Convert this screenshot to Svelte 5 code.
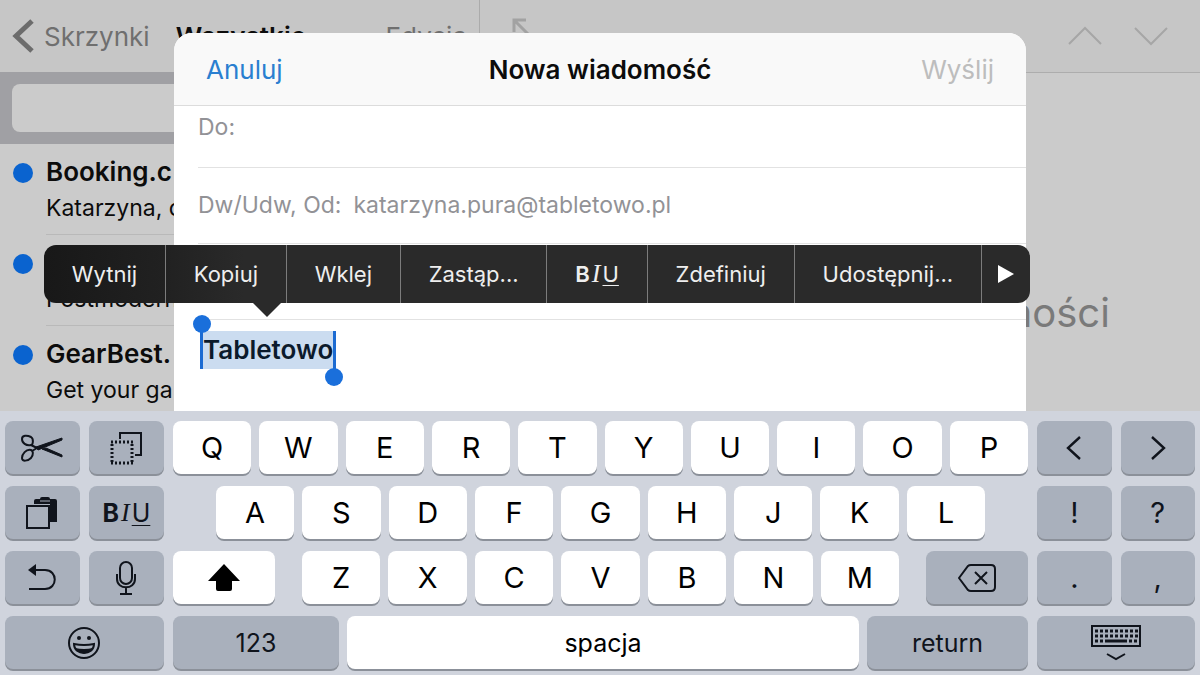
<script>
	const mail_list = [
		{ sender: 'Booking.c', preview: 'Katarzyna, o' },
		{ sender: '', preview: 'Postmodern' },
		{ sender: 'GearBest.', preview: 'Get your ga' }
	];

	const menu_before = ['Wytnij', 'Kopiuj', 'Wklej', 'Zastąp...'];
	const menu_after = ['Zdefiniuj', 'Udostępnij...'];

	const row_one = 'QWERTYUIOP'.split('');
	const row_two = 'ASDFGHJKL'.split('');
	const row_three = 'ZXCVBNM'.split('');

	const dot_xs = [0, 1, 2, 3, 4, 5, 6, 7, 8];

	let recipient = $state('');
	let sender = $state('katarzyna.pura@tabletowo.pl');
	let subject = $state('');
	let search = $state('');
</script>

{#snippet letter(label)}
	<button type="button" class="key light">{label}</button>
{/snippet}

<div class="screen">
	<main class="stage">
		<section class="inbox">
			<header class="bar inbox_bar">
				<button type="button" class="back">
					<svg width="22" height="34" viewBox="0 0 22 34" aria-hidden="true">
						<path d="M20 2 4 17l16 15" fill="none" stroke="#6c6c6c" stroke-width="5" />
					</svg>
					Skrzynki
				</button>
				<h2 class="inbox_title">Wszystkie</h2>
				<button type="button" class="edit">Edycja</button>
			</header>
			<div class="search_band">
				<input class="search" type="search" aria-label="Szukaj" bind:value={search} />
			</div>
			<ul class="mails">
				{#each mail_list as mail (mail.preview)}
					<li class="mail">
						<span class="unread"></span>
						<div class="mail_text">
							<strong class="mail_sender">{mail.sender}</strong>
							<span class="mail_preview">{mail.preview}</span>
						</div>
					</li>
				{/each}
			</ul>
		</section>

		<section class="reader">
			<header class="bar reader_bar">
				<svg class="expand" width="40" height="36" viewBox="0 0 40 36" aria-hidden="true">
					<path d="M2 14V2h12M3 3l14 14" fill="none" stroke="#a2a2a2" stroke-width="3" />
				</svg>
				<svg width="34" height="20" viewBox="0 0 34 20" aria-hidden="true">
					<path d="M1 18 17 2l16 16" fill="none" stroke="#a6a6a6" stroke-width="2" />
				</svg>
				<svg width="34" height="20" viewBox="0 0 34 20" aria-hidden="true">
					<path d="M1 2l16 16L33 2" fill="none" stroke="#a6a6a6" stroke-width="2" />
				</svg>
			</header>
			<p class="empty">Nie zaznaczono wiadomości</p>
		</section>

		<div class="overlay">
			<form class="compose">
				<header class="compose_bar">
					<button type="button" class="cancel">Anuluj</button>
					<h1 class="compose_title">Nowa wiadomość</h1>
					<button type="submit" class="send" disabled>Wyślij</button>
				</header>
				<div class="field first">
					<label for="to">Do:</label>
					<input id="to" type="text" bind:value={recipient} />
				</div>
				<div class="field">
					<label for="from">Dw/Udw, Od:</label>
					<input id="from" type="text" bind:value={sender} />
				</div>
				<div class="field">
					<input type="text" aria-label="Temat" bind:value={subject} />
				</div>
				<div class="message" role="textbox" tabindex="0" aria-label="Treść">
					<span class="selection">Tabletowo</span>
				</div>
			</form>
		</div>

		<div class="menu" role="menu">
			{#each menu_before as item (item)}
				<button type="button" class="menu_item" role="menuitem">{item}</button>
			{/each}
			<button type="button" class="menu_item biu" role="menuitem"><b>B</b><i>I</i><u>U</u></button>
			{#each menu_after as item (item)}
				<button type="button" class="menu_item" role="menuitem">{item}</button>
			{/each}
			<button type="button" class="menu_item more" role="menuitem" aria-label="Więcej">
				<svg width="16" height="18" viewBox="0 0 16 18"><path d="M0 0l16 9-16 9z" fill="#fff" /></svg>
			</button>
		</div>
	</main>

	<section class="keyboard">
		<div class="row">
			<div class="side">
				<button type="button" class="key" aria-label="Wytnij">
					<svg width="42" height="28" viewBox="0 0 42 28" fill="none" stroke="#10141c" stroke-width="2">
						<path d="M1 5c0-4 5-4 9-2 3 2 2 8 0 8-5 1-9-2-9-6z" />
						<path d="M1 24c0 4 6 3 9 0 3-4 2-7 0-8-5-1-9 4-9 8z" />
						<path d="M10 11l6 3M11 17l5-3" />
						<path d="M15 13 41 4v2L17 16zM21 15l4-1 16 7v2z" fill="#10141c" stroke-width="1" />
					</svg>
				</button>
				<button type="button" class="key" aria-label="Zaznacz">
					<svg width="34" height="34" viewBox="0 0 34 34" fill="none" stroke="#10141c" stroke-width="2">
						<path d="M11 8V2h21v22h-6" />
						<path d="M2 11h22M2 32h22M3 13v18M23 13v18" stroke-width="3" stroke-dasharray="2 2" />
					</svg>
				</button>
			</div>
			<div class="center">
				{#each row_one as label (label)}
					{@render letter(label)}
				{/each}
			</div>
			<div class="side">
				<button type="button" class="key" aria-label="W lewo">
					<svg width="16" height="26" viewBox="0 0 16 26"><path d="M14 2 2 13l12 11" fill="none" stroke="#10141c" stroke-width="2.4" /></svg>
				</button>
				<button type="button" class="key" aria-label="W prawo">
					<svg width="16" height="26" viewBox="0 0 16 26"><path d="M2 2l12 11L2 24" fill="none" stroke="#10141c" stroke-width="2.4" /></svg>
				</button>
			</div>
		</div>

		<div class="row">
			<div class="side">
				<button type="button" class="key" aria-label="Wklej">
					<svg width="32" height="34" viewBox="0 0 32 34">
						<path d="M8 8V5q0-2 2-2h4q0-2 2-2h6q2 0 2 2h5q2 0 2 2v21h-7V8z" fill="#10141c" />
						<path d="M14 5h10" stroke="#a9b0bc" stroke-width="1" />
						<path d="M1 10h22v22H1z" fill="#a9b0bc" stroke="#10141c" stroke-width="2" />
					</svg>
				</button>
				<button type="button" class="key biu"><b>B</b><i>I</i><u>U</u></button>
			</div>
			<div class="center">
				<div class="letters inset">
					{#each row_two as label (label)}
						{@render letter(label)}
					{/each}
				</div>
			</div>
			<div class="side">
				<button type="button" class="key">!</button>
				<button type="button" class="key">?</button>
			</div>
		</div>

		<div class="row">
			<div class="side">
				<button type="button" class="key" aria-label="Cofnij">
					<svg width="28" height="28" viewBox="0 0 28 28">
						<path d="M5 6h12c13 0 13 19 0 19H1" fill="none" stroke="#10141c" stroke-width="2" />
						<path d="M0 6l8-6v12z" fill="#10141c" />
					</svg>
				</button>
				<button type="button" class="key" aria-label="Dyktowanie">
					<svg width="20" height="34" viewBox="0 0 20 34" fill="none" stroke="#10141c" stroke-width="2">
						<rect x="4" y="1" width="12" height="22" rx="6" />
						<path d="M1 13v5c0 11 18 11 18 0v-5M10 27v6M4 33h12" />
					</svg>
				</button>
			</div>
			<div class="center">
				<button type="button" class="key light wide" aria-label="Shift">
					<svg width="32" height="28" viewBox="0 0 32 28"><path d="M16 0l16 17h-8v8q0 2-2 2H10q-2 0-2-2v-8H0z" fill="#000" /></svg>
				</button>
				<div class="letters">
					{#each row_three as label (label)}
						{@render letter(label)}
					{/each}
				</div>
				<button type="button" class="key wide" aria-label="Usuń">
					<svg width="38" height="28" viewBox="0 0 38 28" fill="none" stroke="#10141c" stroke-width="2">
						<path d="M13 1h20q4 0 4 4v18q0 4-4 4H13q-2 0-3-1L1 14 10 2q1-1 3-1z" />
						<path d="M17 8l12 12M29 8 17 20" />
					</svg>
				</button>
			</div>
			<div class="side">
				<button type="button" class="key">.</button>
				<button type="button" class="key">,</button>
			</div>
		</div>

		<div class="row">
			<div class="side">
				<button type="button" class="key" aria-label="Emoji">
					<svg width="34" height="34" viewBox="0 0 34 34">
						<circle cx="17" cy="17" r="15" fill="none" stroke="#10141c" stroke-width="2" />
						<circle cx="12" cy="12" r="2" fill="#10141c" />
						<circle cx="22" cy="12" r="2" fill="#10141c" />
						<path d="M7 18q10 2 20 0c0 12-20 12-20 0z" fill="none" stroke="#10141c" stroke-width="2" />
						<path d="M8 22q9 2 18 0c-3 7-15 7-18 0z" fill="#10141c" />
					</svg>
				</button>
			</div>
			<div class="center">
				<button type="button" class="key text numbers">123</button>
				<button type="button" class="key light text space">spacja</button>
				<button type="button" class="key text return">return</button>
			</div>
			<div class="side">
				<button type="button" class="key" aria-label="Ukryj klawiaturę">
					<svg width="50" height="36" viewBox="0 0 50 36" fill="none" stroke="#10141c" stroke-width="2">
						<rect x="1" y="1" width="48" height="20" />
						{#each dot_xs as n (n)}
							<path d="M{4 + n * 5} 6h3M{4 + n * 5} 11h3" stroke-width="3" />
						{/each}
						<path d="M4 16h8M38 16h8" stroke-width="3" stroke-dasharray="3 2" />
						<path d="M14 16h22" stroke-width="3" />
						<path d="M16 29l9 5 9-5" />
					</svg>
				</button>
			</div>
		</div>
	</section>
</div>

<style>
	:global(body) {
		margin: 0;
	}

	.screen {
		display: flex;
		flex-direction: column;
		min-height: 100vh;
		overflow: hidden;
		font-family: Inter, 'Liberation Sans', sans-serif;
		color: #0c0c0c;
		background: #cbcbcb;
	}

	.screen * {
		box-sizing: border-box;
	}

	button,
	input {
		font: inherit;
		color: inherit;
		border: 0;
		padding: 0;
		margin: 0;
		background: none;
		min-width: 0;
	}

	svg {
		display: block;
		flex: none;
	}

	h1,
	h2,
	p,
	ul {
		margin: 0;
		padding: 0;
	}

	.stage {
		position: relative;
		flex: 1;
		display: grid;
		grid-template-columns: 2fr 3fr;
	}

	.bar {
		display: flex;
		align-items: center;
		height: 73px;
		background: #c6c6c6;
	}

	.inbox_bar {
		gap: 26px;
		height: 72px;
		padding: 0 12px;
		border-right: 1px solid #ababab;
		font-size: 26px;
	}

	.back {
		display: flex;
		align-items: center;
		gap: 10px;
		color: #6f6f6f;
	}

	.inbox_title {
		font-size: 26px;
		font-weight: 600;
	}

	.edit {
		margin-left: auto;
		color: #6f6f6f;
	}

	.search_band {
		display: flex;
		padding: 12px;
		height: 72px;
		background: #a0a0a4;
	}

	.search {
		flex: 1;
		border-radius: 8px;
		background: #cbcbcb;
	}

	.mails {
		list-style: none;
	}

	.mail {
		display: flex;
		gap: 13px;
		padding-left: 13px;
	}

	.unread {
		width: 20px;
		height: 20px;
		margin-top: 19px;
		border-radius: 50%;
		background: #0a63cf;
	}

	.mail_text {
		display: flex;
		flex: 1;
		flex-direction: column;
		padding: 10px 0 8px;
		border-bottom: 1px solid #b9b9b9;
	}

	.mail:last-child .mail_text {
		padding-bottom: 0;
		border-bottom: 0;
	}

	.mail_sender {
		height: 36px;
		font-size: 26px;
		font-weight: 600;
		line-height: 36px;
	}

	.mail_preview {
		font-size: 23px;
		line-height: 36px;
	}

	.reader_bar {
		gap: 32px;
		padding: 0 32px;
		border-bottom: 1px solid #adadad;
	}

	.expand {
		margin-right: auto;
	}

	.empty {
		padding-top: 215px;
		font-size: 40px;
		line-height: 50px;
		text-align: center;
		color: #7a7a7a;
	}

	.overlay {
		position: absolute;
		inset: 0;
		display: flex;
		justify-content: center;
		padding-top: 33px;
	}

	.compose {
		width: 71%;
		border-radius: 18px 18px 0 0;
		background: #fff;
		overflow: hidden;
	}

	.compose_bar {
		display: grid;
		grid-template-columns: 1fr auto 1fr;
		align-items: center;
		height: 73px;
		padding: 0 32px;
		border-bottom: 1px solid #dcdcdc;
		background: #f9f9f9;
		font-size: 26px;
	}

	.compose_title {
		font-size: 26px;
		font-weight: 600;
	}

	.cancel {
		justify-self: start;
		color: #2a7fd0;
	}

	.send {
		justify-self: end;
		color: #bdbdbd;
	}

	.field {
		display: flex;
		align-items: center;
		gap: 12px;
		height: 76px;
		margin-left: 24px;
		padding-bottom: 2px;
		border-bottom: 1px solid #e2e2e2;
		font-size: 23px;
		color: #929296;
	}

	.field.first {
		height: 62px;
		padding-bottom: 20px;
	}

	.field input {
		flex: 1;
	}

	.message {
		padding: 11px 26px;
	}

	.selection {
		position: relative;
		display: inline-block;
		background: #cbdcf0;
		font-size: 26px;
		font-weight: 600;
		line-height: 38px;
		border: solid #1c6bd2;
		border-width: 0 3px;
		color: #0b1a2c;
	}

	.selection::before,
	.selection::after {
		content: '';
		position: absolute;
		width: 18px;
		height: 18px;
		border-radius: 50%;
		background: #1a6fdb;
	}

	.selection::before {
		top: -16px;
		left: -10px;
	}

	.selection::after {
		right: -10px;
		bottom: -17px;
	}

	.menu {
		position: absolute;
		top: 245px;
		left: 44px;
		right: 170px;
		display: flex;
		height: 58px;
		border-radius: 12px;
		background: linear-gradient(90deg, #181818, #212121 120px, #2a2a2a 200px);
		color: #eee;
		font-size: 22px;
	}

	.menu::after {
		content: '';
		position: absolute;
		top: 58px;
		left: 209px;
		border: 14px solid transparent;
		border-top-color: #2a2a2a;
		border-bottom: 0;
	}

	.menu_item {
		flex: 1 1 auto;
	}

	.menu_item + .menu_item {
		border-left: 1px solid #7c7c7c;
	}

	.more {
		display: flex;
		flex: 0 0 49px;
		align-items: center;
		justify-content: center;
	}

	.biu {
		line-height: 28px;
	}

	.biu i {
		margin: 0 2px;
		font-family: 'Liberation Serif', serif;
		font-size: 26px;
	}

	.biu b {
		font-weight: 600;
	}

	.biu u {
		text-decoration-thickness: 1px;
		text-underline-offset: 3px;
	}

	.keyboard {
		display: flex;
		flex-direction: column;
		gap: 12px;
		padding: 10px 5px 6px;
		background: #d0d4dd;
	}

	.row {
		display: flex;
		gap: 9px;
		height: 53px;
	}

	.side,
	.center,
	.letters {
		display: flex;
		min-width: 0;
	}

	.side {
		flex: 159;
		gap: 9px;
	}

	.side:last-child {
		flex: 158;
	}

	.center {
		flex: 856;
		gap: 8px;
	}

	.letters {
		flex: 596;
		gap: 8px;
		margin: 0 19px;
	}

	.letters.inset {
		margin: 0 43px;
	}

	.key {
		display: flex;
		flex: 1;
		align-items: center;
		justify-content: center;
		border-radius: 8px;
		background: #a9b0bc;
		box-shadow: 0 2px 0 #8b9099;
		color: #10141c;
		font-size: 29px;
	}

	.key.light {
		background: #fff;
		color: #000;
	}

	.key.biu {
		font-size: 25px;
	}

	.key.biu b {
		font-weight: 700;
	}

	.key.wide {
		flex: 102;
	}

	.key.text {
		font-size: 25px;
	}

	.key.numbers {
		flex: 166;
	}

	.key.space {
		flex: 511;
	}

	.key.return {
		flex: 161;
	}
</style>
